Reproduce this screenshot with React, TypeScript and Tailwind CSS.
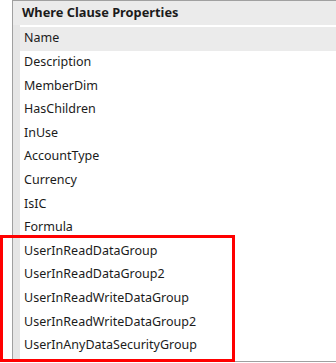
const rows = [
  "Name",
  "Description",
  "MemberDim",
  "HasChildren",
  "InUse",
  "AccountType",
  "Currency",
  "IsIC",
  "Formula",
  "UserInReadDataGroup",
  "UserInReadDataGroup2",
  "UserInReadWriteDataGroup",
  "UserInReadWriteDataGroup2",
  "UserInAnyDataSecurityGroup",
];

export default function App() {
  return (
    <div
      className="relative w-[336px] h-[363px] bg-white overflow-hidden text-[#1b1b1b]"
      style={{ fontFamily: '"Noto Sans", "Open Sans", sans-serif' }}
    >
      <div className="ml-[12px] h-[362px] border-t border-l border-b border-[#a0a0a0] flex flex-col">
        {/* header */}
        <div className="h-[24px] bg-[#ebebeb] flex items-center pl-[9px] text-[12.8px] font-bold">
          Where Clause Properties
        </div>
        <div className="flex flex-1">
          <div className="w-[7px] bg-[#e6e6e6] shrink-0" />
          <div className="flex-1 pt-[2px]">
            {rows.map((r, i) => (
              <div
                key={r}
                className={`h-[23.6px] flex items-center pl-[4px] text-[12.5px] ${i === 0 ? "bg-[#ebebeb]" : ""}`}
              >
                {r}
              </div>
            ))}
          </div>
        </div>
      </div>

      {/* highlight annotation */}
      <div className="absolute left-0 top-[235px] w-[235px] h-[127px] border-[3px] border-[#ff0000]" />
    </div>
  );
}
